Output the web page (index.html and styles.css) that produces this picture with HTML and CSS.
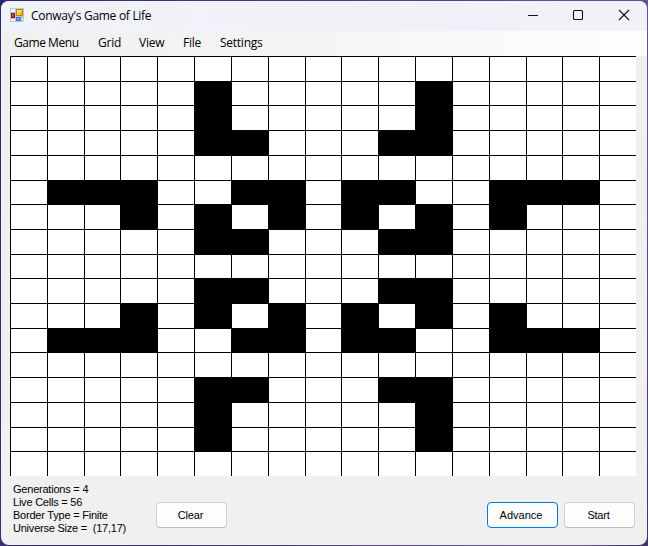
FILE: index.html
```html
<!DOCTYPE html>
<html lang="en">
<head>
<meta charset="utf-8">
<title>Conway's Game of Life</title>
<link rel="stylesheet" href="styles.css">
</head>
<body>
<div class="window">
  <header class="titlebar">
    <svg class="app-icon" width="14" height="14" viewBox="0 0 14 14">
      <defs>
        <linearGradient id="gold" x1="0" y1="0" x2="1" y2="1"><stop offset="0" stop-color="#fff0a0"/><stop offset="1" stop-color="#f0a800"/></linearGradient>
        <linearGradient id="red" x1="0" y1="0" x2="1" y2="1"><stop offset="0" stop-color="#e88878"/><stop offset="1" stop-color="#a81008"/></linearGradient>
        <linearGradient id="blue" x1="0" y1="0" x2="1" y2="1"><stop offset="0" stop-color="#a0d0ff"/><stop offset="1" stop-color="#2864d8"/></linearGradient>
      </defs>
      <path fill="#c4c5c9" d="M0 0h14v14H0z"/>
      <path fill="#f2f2f4" d="M1 1h4v3H1zM1 11h4v2H1zM12 10h1v3h-1z"/>
      <path fill="#b88708" d="M6 1h7v7H6z"/><path fill="url(#gold)" d="M7 2h5v5H7z"/>
      <path fill="#8e1710" d="M1 5h4v5H1z"/><path fill="url(#red)" d="M2 6h2v3H2z"/>
      <path fill="#3e72c8" d="M6 9h5v4H6z"/><path fill="url(#blue)" d="M7 10h4v2H7z"/>
    </svg>
    <span class="title">Conway's Game of Life</span>
    <div class="controls">
      <svg width="46" height="29" viewBox="0 0 46 29"><path d="M18 14.5h10"/></svg>
      <svg width="46" height="29" viewBox="0 0 46 29"><rect x="17.5" y="9.5" width="9" height="9" rx="1"/></svg>
      <svg width="46" height="29" viewBox="0 0 46 29"><path d="M17 9l10 10M27 9L17 19"/></svg>
    </div>
  </header>
  <nav class="menu">
    <span class="game">Game Menu</span><span class="grid-item">Grid</span><span class="view">View</span><span class="file">File</span><span>Settings</span>
  </nav>
  <main class="board" id="board"></main>
  <footer class="footer">
    <div class="stats">
      <div class="generations">Generations = 4</div>
      <div class="live">Live Cells = 56</div>
      <div class="border-type">Border Type = Finite</div>
      <div class="universe">Universe Size = &nbsp;(17,17)</div>
    </div>
    <button class="clear">Clear</button>
    <button class="advance">Advance</button>
    <button class="start">Start</button>
  </footer>
</div>
<script src="script.js"></script>
</body>
</html>
```
FILE: styles.css
```css
* { box-sizing: border-box; }
body {
  margin: 0;
  width: 648px;
  height: 546px;
  padding: 1px;
  overflow: hidden;
  background: linear-gradient(100deg, #30266f, #48407a 45%, #6a5490 90%, #403468);
}
.window {
  width: 646px;
  height: 544px;
  display: flex;
  flex-direction: column;
  overflow: hidden;
  border-radius: 8px;
  background: #f0f0f0;
  color: #000;
}
.titlebar {
  height: 30px;
  flex: none;
  display: flex;
  align-items: center;
  padding-left: 9px;
  background: linear-gradient(90deg, #f0f3f9, #f3f0f8 40%, #f2f0f8);
}
.app-icon { flex: none; margin-top: -2px; }
.title {
  margin-left: 7px;
  font: 12px/16px "Open Sans", sans-serif;
  letter-spacing: -0.29px;
  white-space: nowrap;
}
.controls { display: flex; height: 29px; margin: 0 -1px 1px auto; }
.controls svg { fill: none; stroke: #111; stroke-width: 1.1; }
.menu {
  height: 25px;
  flex: none;
  display: flex;
  align-items: center;
  padding: 0 0 2px 13px;
  background: linear-gradient(90deg, #f0f0f0, #f3f3f3 35%, #fdfdfd 95%);
  font: 12px/16px "Open Sans", sans-serif;
  letter-spacing: -0.25px;
}
.game { width: 84px; letter-spacing: -0.45px; }
.grid-item { width: 41px; }
.view { width: 44px; }
.file { width: 37px; }
.board {
  width: 626px;
  height: 420px;
  flex: none;
  margin-left: 9px;
  display: grid;
  grid-template-columns: repeat(17, 1fr);
  grid-template-rows: repeat(17, 1fr);
  background: #fff;
}
.cell { border-top: 1px solid #000; border-left: 1px solid #000; }
.alive { background: #000; }
.footer {
  flex: 1;
  display: flex;
  align-items: flex-start;
  padding: 7px 12px 0 12px;
  font: 11px/13px "Liberation Sans", sans-serif;
}
.stats { width: 143px; letter-spacing: -0.22px; white-space: nowrap; }
button {
  width: 71px;
  height: 26px;
  margin: 19px 0 0;
  padding: 0;
  border: 1px solid #d0d0d0;
  border-bottom-color: #bcbcbc;
  border-radius: 4px;
  background: #fdfdfd;
  color: #000;
  font: 11px/13px "Liberation Sans", sans-serif;
}
.clear { letter-spacing: -0.2px; padding-right: 2px; }
.advance { margin-left: auto; border-color: #0078d4; padding-right: 3px; }
.start { margin-left: 6px; padding-right: 2px; letter-spacing: -0.2px; }
```
FILE: script.js
```js
const universe = [
  ".................",
  ".....#.....#.....",
  ".....#.....#.....",
  ".....##...##.....",
  ".................",
  ".###..##.##..###.",
  "...#.#.#.#.#.#...",
  ".....##...##.....",
  ".................",
  ".....##...##.....",
  "...#.#.#.#.#.#...",
  ".###..##.##..###.",
  ".................",
  ".....##...##.....",
  ".....#.....#.....",
  ".....#.....#.....",
  "................."
];
const board = document.getElementById("board");
for (const row of universe) {
  for (const state of row) {
    const cell = document.createElement("div");
    cell.className = state === "#" ? "cell alive" : "cell";
    board.append(cell);
  }
}
```
